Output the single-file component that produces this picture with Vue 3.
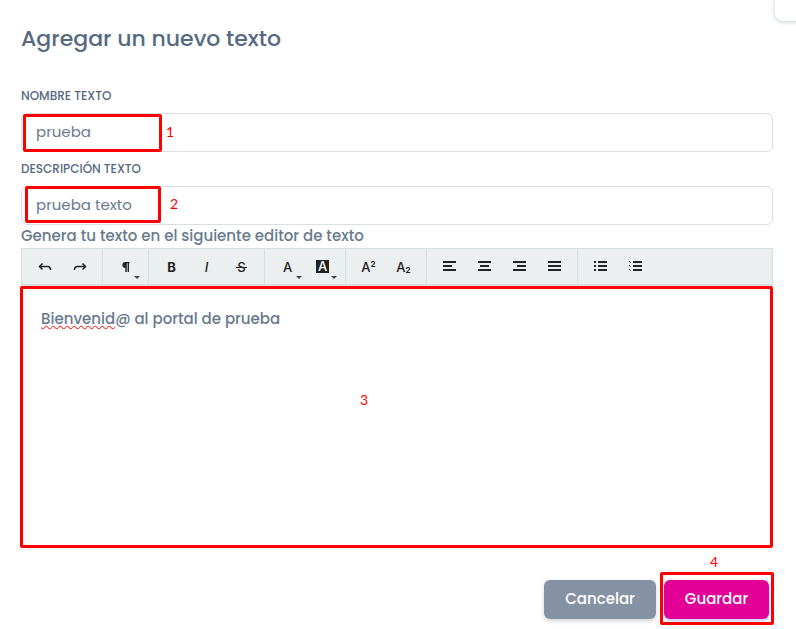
<template>
  <div class="page">
    <div class="corner-tab"></div>

    <form class="text-form" @submit.prevent="saveText">
      <h1 class="title">Agregar un nuevo texto</h1>

      <div class="field">
        <label for="textName" class="field-label">Nombre texto</label>
        <div class="field-control">
          <input id="textName" v-model="textData.name" type="text" class="input-field" />
          <span class="mark mark-name"></span>
          <span class="step step-name">1</span>
        </div>
      </div>

      <div class="field">
        <label for="textDescription" class="field-label">Descripción texto</label>
        <div class="field-control">
          <input
            id="textDescription"
            v-model="textData.description"
            type="text"
            class="input-field"
          />
          <span class="mark mark-description"></span>
          <span class="step step-description">2</span>
        </div>
      </div>

      <p id="editorLabel" class="editor-label">Genera tu texto en el siguiente editor de texto</p>

      <div class="toolbar" role="toolbar">
        <div v-for="(group, i) in toolGroups" :key="i" class="tool-group">
          <button
            v-for="tool in group"
            :key="tool.name"
            type="button"
            class="tool-btn"
            :aria-label="tool.name"
          >
            <svg v-if="tool.path" class="tool-icon" viewBox="0 0 16 16">
              <path :d="tool.path" :class="{ filled: tool.filled }" />
            </svg>
            <span v-else class="tool-glyph" :class="tool.style">
              {{ tool.glyph }}<small v-if="tool.small">{{ tool.small }}</small>
            </span>
            <span v-if="tool.menu" class="caret"></span>
          </button>
        </div>
      </div>

      <div class="editor">
        <div
          class="editor-body"
          contenteditable="true"
          role="textbox"
          aria-labelledby="editorLabel"
          spellcheck="false"
        >
          <p><span class="misspelled">Bienvenid</span>@ al portal de prueba</p>
        </div>
        <span class="step step-editor">3</span>
      </div>

      <div class="button-group">
        <button type="button" class="btn cancel-btn" @click="cancelAction">Cancelar</button>
        <div class="save-wrap">
          <button type="submit" class="btn submit-btn">Guardar</button>
          <span class="mark mark-save"></span>
          <span class="step step-save">4</span>
        </div>
      </div>
    </form>
  </div>
</template>

<script setup>
import { ref } from 'vue';

const emit = defineEmits(['save', 'cancel']);

const textData = ref({
  name: 'prueba',
  description: 'prueba texto',
});

// Botones de la barra del editor, por grupos
const toolGroups = [
  [
    { name: 'Deshacer', path: 'M5.5 4.5L2.5 7.5l3 3M3 7.5h7.5q3 0 3 3.5' },
    { name: 'Rehacer', path: 'M10.5 4.5l3 3-3 3M13 7.5H5.5q-3 0-3 3.5' },
  ],
  [
    {
      name: 'Formato',
      path: 'M11.5 3H7.3a2.9 2.9 0 0 0 0 5.8V13h1.5V4.2h.8V13h1.4V4.2h.5z',
      filled: true,
      menu: true,
    },
  ],
  [
    { name: 'Negrita', glyph: 'B', style: 'bold' },
    { name: 'Cursiva', glyph: 'I', style: 'italic' },
    { name: 'Tachado', glyph: 'S', style: 'strike' },
  ],
  [
    { name: 'Color de texto', glyph: 'A', menu: true },
    { name: 'Color de fondo', glyph: 'A', style: 'inverted', menu: true },
  ],
  [
    { name: 'Superíndice', glyph: 'A', small: '2', style: 'sup' },
    { name: 'Subíndice', glyph: 'A', small: '2', style: 'sub' },
  ],
  [
    { name: 'Izquierda', path: 'M1 2h13v2H1zM1 6h9v2H1zM1 10h13v2H1z', filled: true },
    { name: 'Centrar', path: 'M1 2h13v2H1zM3 6h9v2H3zM1 10h13v2H1z', filled: true },
    { name: 'Derecha', path: 'M1 2h13v2H1zM5 6h9v2H5zM1 10h13v2H1z', filled: true },
    { name: 'Justificar', path: 'M1 2h13v2H1zM1 6h13v2H1zM1 10h13v2H1z', filled: true },
  ],
  [
    {
      name: 'Viñetas',
      path: 'M1 2h2v2H1zM5 2h9v2H5zM1 6h2v2H1zM5 6h9v2H5zM1 10h2v2H1zM5 10h9v2H5z',
      filled: true,
    },
    {
      name: 'Numeración',
      path: 'M1 2h1v1H1zM2 3h.6v1H2zM5 2h9v2H5zM1 6h1v1H1zM2 7h.6v1H2zM5 6h9v2H5zM1 10h1v1H1zM2 11h.6v1H2zM5 10h9v2H5z',
      filled: true,
    },
  ],
];

const saveText = () => {
  emit('save', { ...textData.value });
};

const cancelAction = () => {
  emit('cancel');
};
</script>

<style>
body {
  margin: 0;
  background: #fff;
}
</style>

<style scoped>
.page {
  position: relative;
  overflow: hidden;
  padding: 20px 23px 10px 21px;
  font-family: Poppins, Inter, 'Open Sans', sans-serif;
  color: #566a7f;
}

.page *,
.page *::before {
  box-sizing: border-box;
}

/* Panel que asoma por la esquina */
.corner-tab {
  position: absolute;
  top: -10px;
  right: -10px;
  width: 31px;
  height: 31px;
  border-radius: 8px;
  background: #fff;
  box-shadow: 0 1px 5px rgba(67, 89, 113, 0.3);
}

.title {
  margin: 0 0 29px;
  font-size: 22px;
  line-height: 38px;
  font-weight: 500;
}

/* Campos */
.field {
  margin-bottom: 8px;
}

.field + .editor-label {
  margin-top: -8px;
}

.field-label {
  display: block;
  margin-bottom: 8px;
  font-size: 12px;
  line-height: 18px;
  font-weight: 500;
  text-transform: uppercase;
}

.field-control {
  position: relative;
}

.input-field {
  display: block;
  width: 100%;
  height: 39px;
  padding: 0 14px 2px;
  border: 1px solid #d9dee3;
  border-radius: 6px;
  outline: none;
  background: #fff;
  color: #697a8d;
  font-family: inherit;
  font-size: 15px;
}

.editor-label {
  margin: 0;
  padding-bottom: 1px;
  font-size: 15px;
  line-height: 22px;
  font-weight: 500;
  color: #697a8d;
}

/* Barra de herramientas */
.toolbar {
  display: flex;
  height: 38px;
  border: 1px solid #d5dee1;
  border-bottom-width: 2px;
  background: #ebeff0;
}

.tool-group {
  display: flex;
  padding: 0 5px;
  border-right: 1px solid #d5dee1;
}

.tool-group:last-child {
  border-right: none;
}

.tool-btn {
  position: relative;
  display: flex;
  align-items: center;
  justify-content: center;
  width: 35px;
  padding: 0;
  border: none;
  background: none;
  color: #222;
}

.tool-icon {
  width: 16px;
  height: 16px;
}

.tool-icon path {
  fill: none;
  stroke: currentColor;
  stroke-width: 1.5;
}

.tool-icon path.filled {
  fill: currentColor;
  stroke: none;
}

.tool-glyph {
  font-family: Inter, sans-serif;
  font-size: 13px;
  line-height: 14px;
  font-weight: 500;
}

.tool-glyph.bold {
  font-weight: 700;
}

.tool-glyph.italic {
  font-style: italic;
}

.tool-glyph.strike {
  position: relative;
}

.tool-glyph.strike::before {
  content: '';
  position: absolute;
  top: 7px;
  left: -1px;
  right: -1px;
  height: 1px;
  background: currentColor;
}

.tool-glyph.inverted {
  width: 13px;
  height: 13px;
  background: #222;
  color: #fff;
  line-height: 13px;
}

.tool-glyph small {
  font-size: 8px;
  line-height: 8px;
  font-weight: 700;
}

.tool-glyph.sup,
.tool-glyph.sub {
  display: flex;
}

.tool-glyph.sub small {
  align-self: flex-end;
}

.caret {
  position: absolute;
  right: 3px;
  bottom: 5px;
  border: 3px solid transparent;
  border-top-color: #444;
  border-bottom: none;
}

/* Editor */
.editor {
  position: relative;
  margin: 0 0 0 -1px;
  border: 3px solid #f00;
  border-radius: 2px;
}

.editor-body {
  min-height: 256px;
  padding: 18px;
  outline: none;
  font-size: 15px;
  line-height: 24px;
  font-weight: 500;
  color: #697a8d;
}

.editor-body p {
  margin: 0;
}

.misspelled {
  text-decoration: underline wavy #f00 1px;
}

/* Botones */
.button-group {
  display: flex;
  justify-content: flex-end;
  gap: 8px;
  margin-top: 32px;
  padding-right: 4px;
}

.save-wrap {
  position: relative;
}

.btn {
  height: 39px;
  padding: 0 0 2px;
  border: none;
  border-radius: 6px;
  color: #fff;
  font-family: inherit;
  font-size: 15px;
  font-weight: 500;
  cursor: pointer;
}

.cancel-btn {
  width: 112px;
  background: #8592a3;
  box-shadow: 0 2px 4px rgba(133, 146, 163, 0.4);
}

.submit-btn {
  width: 105px;
  background: #e20097;
  box-shadow: 0 2px 4px rgba(105, 108, 255, 0.4);
}

/* Marcos y números de los pasos */
.mark {
  position: absolute;
  border: 3px solid #f00;
  border-radius: 2px;
  pointer-events: none;
}

.mark-name {
  top: 1px;
  left: 2px;
  width: 139px;
  height: 38px;
}

.mark-description {
  top: 0;
  left: 4px;
  width: 136px;
  height: 37px;
}

.mark-save {
  top: -8px;
  left: -4px;
  width: 114px;
  height: 53px;
}

.step {
  position: absolute;
  color: #f00;
  font-family: Lato, sans-serif;
  font-size: 14px;
  line-height: 18px;
  pointer-events: none;
}

.step-name {
  top: 10px;
  left: 145px;
}

.step-description {
  top: 9px;
  left: 149px;
}

.step-editor {
  top: 102px;
  left: 337px;
}

.step-save {
  top: -27px;
  left: 46px;
}
</style>
